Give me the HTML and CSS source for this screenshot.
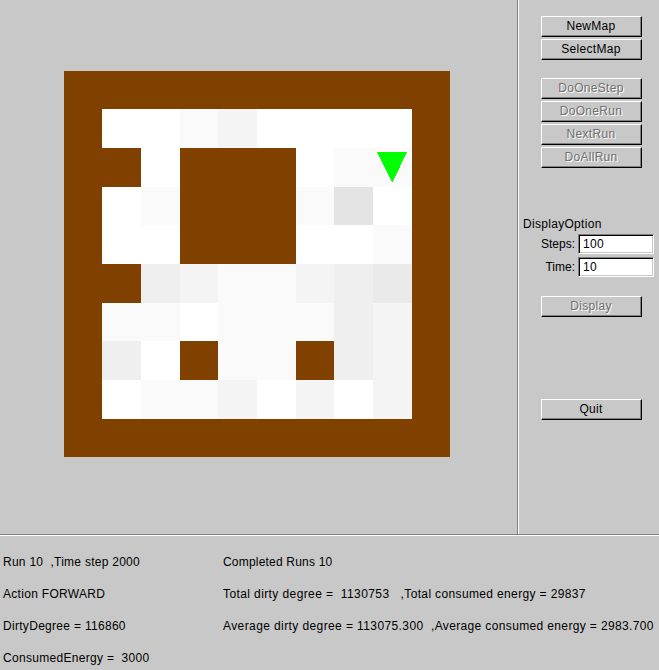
FILE: index.html
```html
<!DOCTYPE html>
<html lang="en">
<head>
<meta charset="utf-8">
<title>Vacuum Simulator</title>
<link rel="stylesheet" href="styles.css">
</head>
<body>
<div class="app">
  <div class="top">
    <main class="stage">
      <div class="map">
        <i></i><i></i><i></i><i></i><i></i><i></i><i></i><i></i><i></i><i></i>
        <i></i><i class="d0"></i><i class="d0"></i><i class="d1"></i><i class="d2"></i><i class="d0"></i><i class="d0"></i><i class="d0"></i><i class="d0"></i><i></i>
        <i></i><i></i><i class="d0"></i><i></i><i></i><i></i><i class="d0"></i><i class="d1"></i><i class="d1"><svg class="agent" viewBox="0 0 30 30"><path d="M0 0H30L15.5 30H15Z"/></svg></i><i></i>
        <i></i><i class="d0"></i><i class="d1"></i><i></i><i></i><i></i><i class="d1"></i><i class="d5"></i><i class="d0"></i><i></i>
        <i></i><i class="d0"></i><i class="d0"></i><i></i><i></i><i></i><i class="d0"></i><i class="d0"></i><i class="d1"></i><i></i>
        <i></i><i></i><i class="d3"></i><i class="d2"></i><i class="d1"></i><i class="d1"></i><i class="d2"></i><i class="d3"></i><i class="d4"></i><i></i>
        <i></i><i class="d1"></i><i class="d1"></i><i class="d0"></i><i class="d1"></i><i class="d1"></i><i class="d1"></i><i class="d3"></i><i class="d2"></i><i></i>
        <i></i><i class="d3"></i><i class="d0"></i><i></i><i class="d1"></i><i class="d1"></i><i></i><i class="d3"></i><i class="d2"></i><i></i>
        <i></i><i class="d0"></i><i class="d1"></i><i class="d1"></i><i class="d2"></i><i class="d0"></i><i class="d2"></i><i class="d0"></i><i class="d2"></i><i></i>
        <i></i><i></i><i></i><i></i><i></i><i></i><i></i><i></i><i></i><i></i>
      </div>
    </main>
    <aside class="side">
      <div class="group">
        <button>NewMap</button>
        <button>SelectMap</button>
      </div>
      <div class="group run">
        <button disabled>DoOneStep</button>
        <button disabled>DoOneRun</button>
        <button disabled>NextRun</button>
        <button disabled>DoAllRun</button>
      </div>
      <div class="options">
        <div class="heading">DisplayOption</div>
        <label><span>Steps:</span><input type="text" value="100"></label>
        <label><span>Time:</span><input type="text" value="10"></label>
      </div>
      <div class="group display"><button disabled>Display</button></div>
      <div class="group quit"><button>Quit</button></div>
    </aside>
  </div>
  <footer class="status">
    <div class="col">
      <p><span class="s1">Run 10  ,Time step 2000</span></p>
      <p><span class="s2">Action FORWARD</span></p>
      <p><span class="s3">DirtyDegree = 116860</span></p>
      <p><span class="s4">ConsumedEnergy =  3000</span></p>
    </div>
    <div class="col">
      <p><span class="s5">Completed Runs 10</span></p>
      <p><span class="s6">Total dirty degree =  1130753</span><span class="s7">   ,Total consumed energy = 29837</span></p>
      <p><span class="s8">Average dirty degree = 113075.300</span><span class="s9">  ,Average consumed energy = 2983.700</span></p>
    </div>
  </footer>
</div>
</body>
</html>
```
FILE: styles.css
```css
* { box-sizing: border-box; }
body {
  margin: 0;
  background: #c8c8c8;
  color: #000;
  font: 12px/14px "Liberation Sans", Arial, sans-serif;
  letter-spacing: 0.3px;
}
.app { width: 659px; height: 670px; overflow: hidden; }
.top { display: flex; height: 534px; }
.stage { width: 517px; padding: 71px 0 0 64px; }
.map {
  display: grid;
  width: 386px;
  grid-template-columns: 38px 39px 39px 38px 39px 39px 38px 39px 39px 38px;
  grid-template-rows: 38px 39px 39px 38px 39px 39px 38px 39px 39px 38px;
  background: #804000;
}
.d0 { background: #fff; }
.d1 { background: #fafafa; }
.d2 { background: #f4f4f4; }
.d3 { background: #efefef; }
.d4 { background: #eaeaea; }
.d5 { background: #e4e4e4; }
.agent { display: block; width: 30px; height: 30px; margin: 4px 0 0 4px; fill: #0f0; shape-rendering: crispEdges; }
.side {
  flex: 1;
  border-left: 1px solid #808080;
  box-shadow: inset 1px 0 #fff;
  padding-top: 16px;
}
.group { display: flex; flex-direction: column; gap: 2px; margin-left: 23px; }
.run { margin-top: 18px; }
button {
  width: 101px;
  height: 21px;
  padding: 0 1px 1px 0;
  border: 1px solid;
  border-color: #fff #000 #000 #fff;
  box-shadow: inset -1px -1px #808080;
  background: #c8c8c8;
  color: #000;
  font: inherit;
  letter-spacing: inherit;
}
button:disabled { color: #707070; text-shadow: 1px 1px #fff; }
.options { margin-top: 49px; }
.heading { height: 17px; padding-left: 5px; }
label { display: flex; height: 20px; margin-bottom: 3px; align-items: center; }
label span { width: 57px; margin-right: 3px; text-align: right; letter-spacing: 0; }
input {
  width: 76px;
  height: 20px;
  padding: 0 0 0 4px;
  border: 1px solid;
  border-color: #808080 #fff #fff #808080;
  box-shadow: inset 1px 1px #000, inset -1px -1px #c8c8c8;
  background: #fff;
  font: inherit;
  letter-spacing: inherit;
}
.display { margin-top: 19px; }
.quit { margin-top: 82px; }
.status {
  display: flex;
  height: 136px;
  border-top: 1px solid #808080;
  box-shadow: inset 0 1px #fff;
  padding: 20px 0 0 3px;
}
.col { flex: none; width: 220px; }
p { height: 32px; margin: 0; line-height: 14px; white-space: pre; }
.s1 { letter-spacing: 0.26px; }
.s5 { letter-spacing: 0.2px; }
.s6, .s8 { letter-spacing: 0.4px; }
.s7, .s9 { letter-spacing: 0.36px; }
```
